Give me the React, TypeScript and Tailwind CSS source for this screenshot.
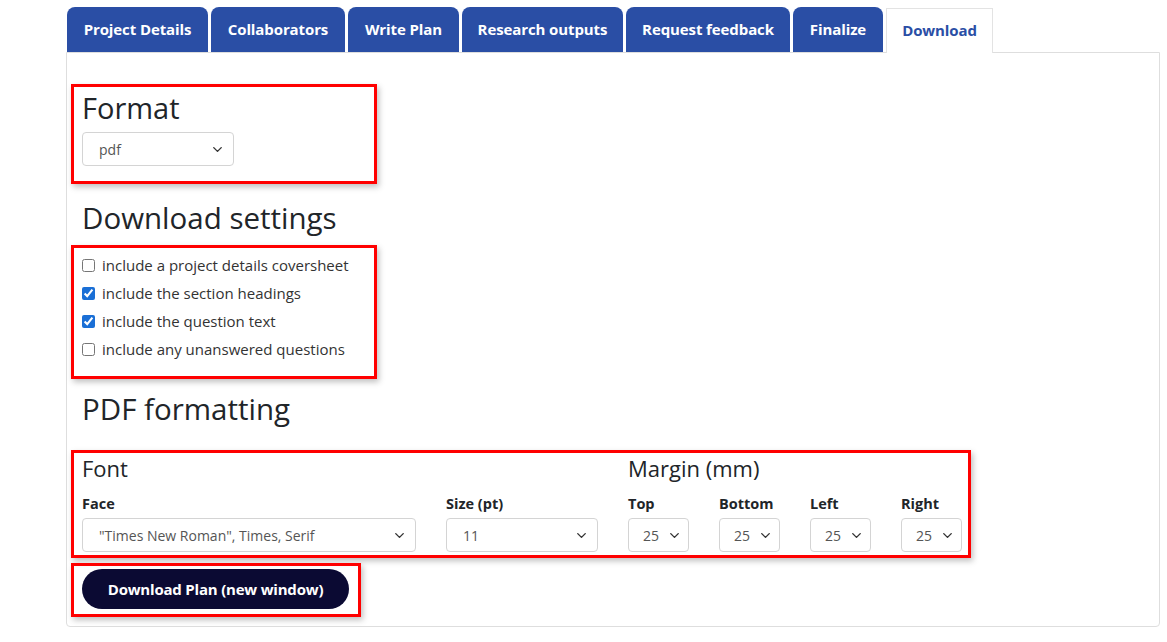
import { ChevronDown } from 'lucide-react';

const tabs = [
  { label: 'Project Details', w: 'w-[141px]' },
  { label: 'Collaborators', w: 'w-[134px]' },
  { label: 'Write Plan', w: 'w-[111px]' },
  { label: 'Research outputs', w: 'w-[161px]' },
  { label: 'Request feedback', w: 'w-[164px]' },
  { label: 'Finalize', w: 'w-[90px]' },
];

const options = [
  { label: 'include a project details coversheet', checked: false },
  { label: 'include the section headings', checked: true },
  { label: 'include the question text', checked: true },
  { label: 'include any unanswered questions', checked: false },
];

const margins = ['Top', 'Bottom', 'Left', 'Right'];

const Select = ({ value, className }: { value: string; className: string }) => (
  <div
    className={`relative flex h-[34px] items-center rounded border border-[#d4d4d4] bg-white pl-4 pr-2 text-[14px] text-[#555] ${className}`}
  >
    <span className="flex-1 truncate">{value}</span>
    <ChevronDown className="h-[15px] w-[15px] shrink-0 text-[#333]" strokeWidth={2.25} />
  </div>
);

const RedBox: React.FC<{ className?: string; children?: React.ReactNode }> = ({
  className = '',
  children,
}) => (
  <div
    className={`border-[3px] border-[#ff0000] shadow-[2px_3px_6px_rgba(0,0,0,0.25)] ${className}`}
  >
    {children}
  </div>
);

export default function App() {
  return (
    <div
      className="min-h-screen bg-white pl-[66px] pr-[7px] pt-[7px] text-[#212529]"
      style={{ fontFamily: '"Open Sans", "Noto Sans", sans-serif' }}
    >
      {/* tabs */}
      <div className="flex h-[45px] items-stretch gap-[3px] pl-px">
        {tabs.map(({ label, w }) => (
          <div
            key={label}
            className={`${w} flex items-center justify-center rounded-t-[8px] bg-[#2a4ea5] text-[15px] font-bold tracking-[-0.1px] text-white`}
          >
            {label}
          </div>
        ))}
        <div className="relative top-px flex w-[107px] items-center justify-center border border-b-0 border-[#e3e3e3] bg-white pb-px text-[15px] font-bold tracking-[-0.1px] text-[#2a4ea5]">
          Download
        </div>
      </div>

      {/* panel */}
      <div className="h-[575px] rounded-b border border-[#dedede] px-[4px] pt-[31px]">
        <RedBox className="w-[306px] pb-[15px] pl-[8px] pt-[2px]">
          <h2 className="text-[29px] leading-[38px] font-medium">Format</h2>
          <Select value="pdf" className="mt-[5px] w-[152px]" />
        </RedBox>

        <h2 className="mt-[15px] pl-[11px] text-[29.5px] leading-[38px] font-medium">
          Download settings
        </h2>

        <RedBox className="mt-[8px] w-[306px] pb-[13px] pl-[8px] pt-[3px]">
          {options.map(({ label, checked }) => (
            <label key={label} className="flex h-[28px] items-center gap-[7px] text-[15px] text-[#333]">
              <input
                type="checkbox"
                defaultChecked={checked}
                className="h-[13px] w-[13px] accent-[#1a6fd6]"
              />
              <span>{label}</span>
            </label>
          ))}
        </RedBox>

        <h2 className="mt-[11px] pl-[11px] text-[29.5px] leading-[38px] font-medium">
          PDF formatting
        </h2>

        <RedBox className="mt-[22px] w-[900px] pb-[3px] pl-[8px] pt-0">
          <div className="flex gap-[30px]">
            <div>
              <h3 className="text-[22px] leading-[30px] font-medium">Font</h3>
              <div className="mt-[9px] flex gap-[30px]">
                <div>
                  <div className="text-[14.5px] font-bold leading-[24px]">Face</div>
                  <Select value={'"Times New Roman", Times, Serif'} className="mt-[2px] w-[334px]" />
                </div>
                <div>
                  <div className="text-[14.5px] font-bold leading-[24px]">Size (pt)</div>
                  <Select value="11" className="mt-[2px] w-[152px]" />
                </div>
              </div>
            </div>
            <div>
              <h3 className="text-[22px] leading-[30px] font-medium">Margin (mm)</h3>
              <div className="mt-[9px] flex gap-[30px]">
                {margins.map((m) => (
                  <div key={m}>
                    <div className="text-[14.5px] font-bold leading-[24px]">{m}</div>
                    <Select value="25" className="mt-[2px] w-[61px] pl-[14px] pr-[6px]" />
                  </div>
                ))}
              </div>
            </div>
          </div>
        </RedBox>

        <RedBox className="mt-[5px] w-[290px] px-[8px] pb-[5px] pt-[3px]">
          <button className="h-[40px] w-[267px] rounded-full bg-[#0b0a33] text-[15px] font-bold tracking-[-0.2px] text-white">
            Download Plan (new window)
          </button>
        </RedBox>
      </div>
    </div>
  );
}
